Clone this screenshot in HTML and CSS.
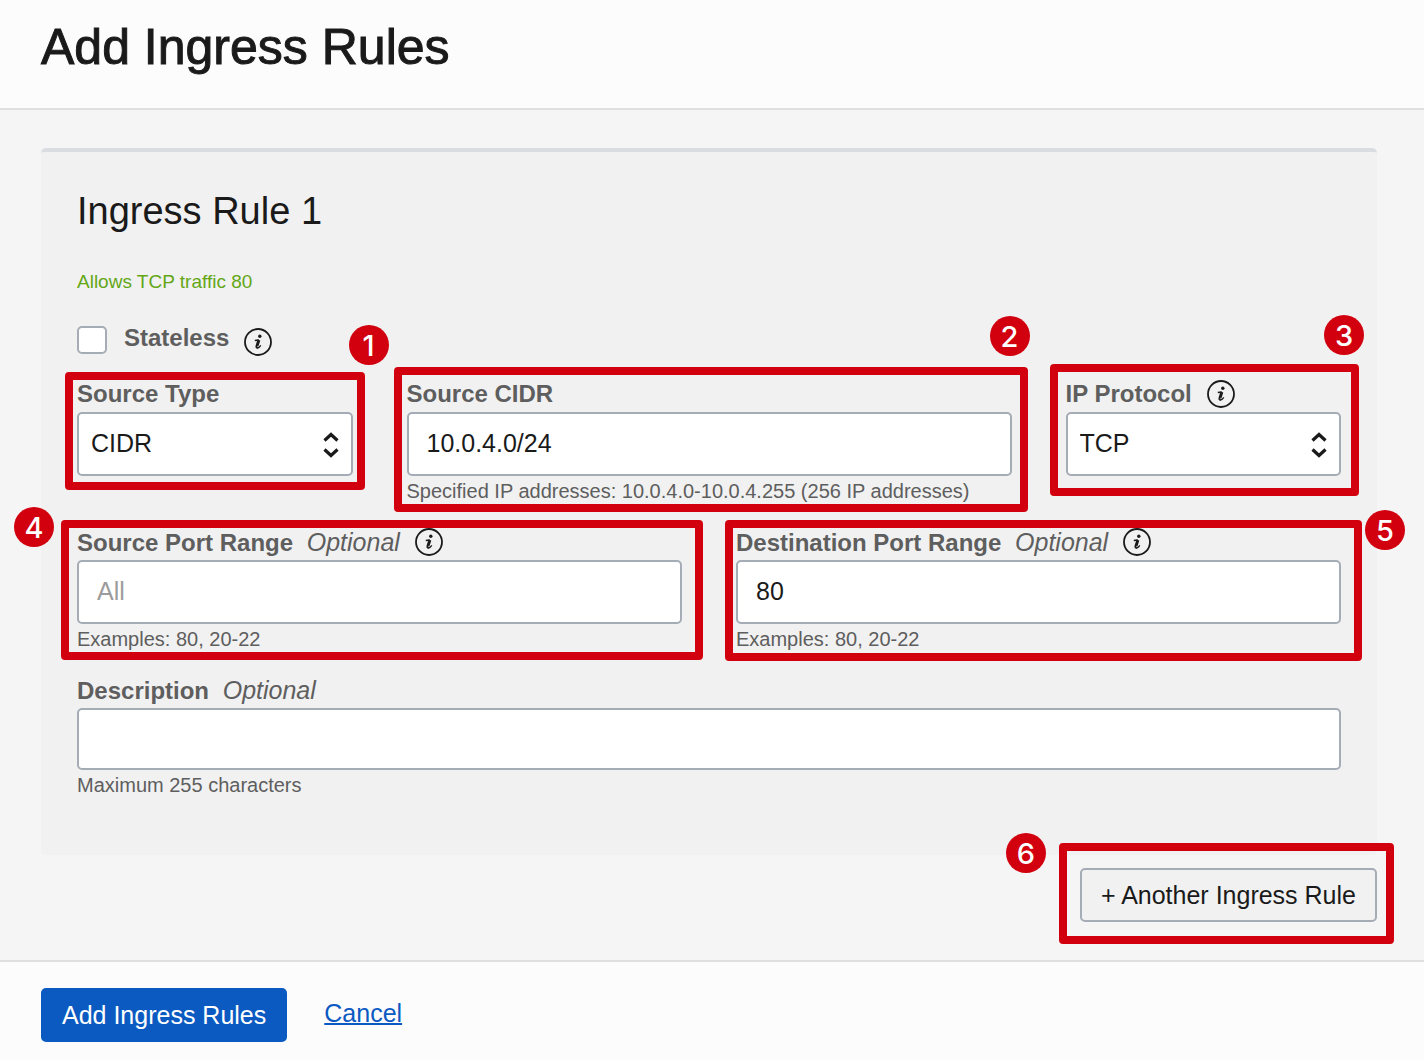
FILE: index.html
```html
<!DOCTYPE html>
<html lang="en">
<head>
<meta charset="utf-8">
<meta name="viewport" content="width=device-width, initial-scale=1">
<title>Add Ingress Rules</title>
<link rel="stylesheet" href="styles.css">
</head>
<body>
<svg width="0" height="0" class="sprite" aria-hidden="true">
  <symbol id="info" viewBox="0 0 28 28">
    <circle cx="14" cy="14" r="13" fill="none" stroke="currentColor" stroke-width="1.8"/>
    <circle cx="15.8" cy="8.2" r="1.7" fill="currentColor"/>
    <path d="M10.8 12.5 L14.8 12" fill="none" stroke="currentColor" stroke-width="1.4"/>
    <path d="M14.9 12 L13 18 Q12.6 19.6 13.7 19.3" fill="none" stroke="currentColor" stroke-width="2.9"/>
    <path d="M13.3 20 Q15.4 19.6 16.8 17.3" fill="none" stroke="currentColor" stroke-width="1.3"/>
  </symbol>
  <symbol id="updown" viewBox="0 0 16 26">
    <path d="M1.5 8.5 L8 2.5 L14.5 8.5 M1.5 17.5 L8 23.5 L14.5 17.5" fill="none" stroke="currentColor" stroke-width="3.2"/>
  </symbol>
</svg>

<header class="page-header">
  <h1>Add Ingress Rules</h1>
</header>

<main class="page-body">
  <section class="card">
    <h2>Ingress Rule 1</h2>
    <p class="summary">Allows TCP traffic 80</p>

    <div class="check-row">
      <input type="checkbox" id="stateless" class="checkbox">
      <label for="stateless" class="check-label">Stateless</label>
      <button type="button" class="info info-low" aria-label="About stateless rules"><svg><use href="#info"/></svg></button>
    </div>

    <div class="fields">
      <div class="field">
        <div class="label-row"><label for="source-type">Source Type</label></div>
        <div class="select-wrap">
          <select id="source-type" class="control select"><option>CIDR</option></select>
          <svg class="arrows" aria-hidden="true"><use href="#updown"/></svg>
        </div>
        <span class="frame frame-1"></span><span class="badge badge-1">1</span>
      </div>

      <div class="field wide">
        <div class="label-row"><label for="source-cidr">Source CIDR</label></div>
        <input type="text" id="source-cidr" class="control" value="10.0.4.0/24">
        <p class="hint">Specified IP addresses: 10.0.4.0-10.0.4.255 (256 IP addresses)</p>
        <span class="frame frame-2"></span><span class="badge badge-2">2</span>
      </div>

      <div class="field">
        <div class="label-row">
          <label for="protocol">IP Protocol</label>
          <button type="button" class="info" aria-label="About IP protocol"><svg><use href="#info"/></svg></button>
        </div>
        <div class="select-wrap">
          <select id="protocol" class="control select"><option>TCP</option></select>
          <svg class="arrows" aria-hidden="true"><use href="#updown"/></svg>
        </div>
        <span class="frame frame-3"></span><span class="badge badge-3">3</span>
      </div>

      <div class="field wide">
        <div class="label-row">
          <label for="source-port">Source Port Range <em>Optional</em></label>
          <button type="button" class="info" aria-label="About source port range"><svg><use href="#info"/></svg></button>
        </div>
        <input type="text" id="source-port" class="control" placeholder="All">
        <p class="hint">Examples: 80, 20-22</p>
        <span class="frame frame-4"></span><span class="badge badge-4">4</span>
      </div>

      <div class="field wide">
        <div class="label-row">
          <label for="dest-port">Destination Port Range <em>Optional</em></label>
          <button type="button" class="info" aria-label="About destination port range"><svg><use href="#info"/></svg></button>
        </div>
        <input type="text" id="dest-port" class="control" value="80">
        <p class="hint">Examples: 80, 20-22</p>
        <span class="frame frame-5"></span><span class="badge badge-5">5</span>
      </div>

      <div class="field full">
        <div class="label-row"><label for="description">Description <em>Optional</em></label></div>
        <input type="text" id="description" class="control control-short">
        <p class="hint">Maximum 255 characters</p>
      </div>
    </div>
  </section>

  <div class="add-row">
    <div class="add-wrap">
      <button type="button" class="button">+ Another Ingress Rule</button>
      <span class="frame frame-6"></span><span class="badge badge-6">6</span>
    </div>
  </div>
</main>

<footer class="page-footer">
  <button type="submit" class="button primary">Add Ingress Rules</button>
  <a href="#" class="cancel">Cancel</a>
</footer>
</body>
</html>
```

FILE: styles.css
```css
* {
  box-sizing: border-box;
}

body {
  margin: 0;
  min-height: 100vh;
  display: flex;
  flex-direction: column;
  background: #f5f5f5;
  color: #1a1a1a;
  font-family: "Liberation Sans", Arial, sans-serif;
  font-size: 25px;
}

h1, h2, p {
  margin: 0;
  font-weight: 400;
}

button, input, select {
  margin: 0;
  font: inherit;
  color: inherit;
}

.sprite {
  position: absolute;
}

.page-header {
  padding: 17px 41px 31px;
  background: #fcfcfc;
  border-bottom: 2px solid #dfdfdf;
}

h1 {
  font-size: 50px;
  line-height: 60px;
  -webkit-text-stroke: 1px #1a1a1a;
}

.page-body {
  flex: 1;
  padding: 38px 47px 38px 41px;
}

.card {
  padding: 35px 36px 55px;
  background: #f1f1f1;
  border-top: 4px solid #d9dce0;
  border-radius: 5px;
}

h2 {
  margin-bottom: 35px;
  font-size: 38px;
  line-height: 48px;
}

.summary {
  margin-bottom: 28px;
  color: #63a716;
  font-size: 19px;
  line-height: 24px;
}

.check-row {
  display: flex;
  align-items: center;
  height: 36px;
  margin-bottom: 18px;
}

.checkbox {
  appearance: none;
  width: 30px;
  height: 28px;
  margin-right: 17px;
  background: #fff;
  border: 2px solid #a6acb6;
  border-radius: 5px;
}

.check-label {
  padding-bottom: 4px;
  margin-right: 15px;
}

label {
  color: #5e5e5e;
  font-size: 24px;
  font-weight: 700;
}

label em {
  margin-left: 7px;
  font-size: 25px;
  font-weight: 400;
}

.info {
  display: block;
  width: 28px;
  height: 28px;
  padding: 0;
  background: none;
  border: 0;
}

.info-low {
  margin-top: 4px;
}

.info svg {
  display: block;
  width: 28px;
  height: 28px;
}

.fields {
  display: grid;
  grid-template-columns: repeat(4, minmax(0, 1fr));
  gap: 18px 54px;
  align-items: start;
}

.field {
  position: relative;
}

.wide {
  grid-column: span 2;
}

.full {
  grid-column: 1 / -1;
}

.label-row {
  display: flex;
  align-items: center;
  gap: 15px;
  height: 36px;
  white-space: nowrap;
}

.control {
  display: block;
  width: 100%;
  height: 64px;
  padding: 0 18px 2px;
  background: #fff;
  border: 2px solid #a6acb6;
  border-radius: 5px;
}

.control-short {
  height: 62px;
}

.control::placeholder {
  color: #9c9c9c;
}

.select-wrap {
  position: relative;
}

.select {
  appearance: none;
  padding: 0 12px 2px;
}

.arrows {
  position: absolute;
  top: 20px;
  right: 14px;
  width: 16px;
  height: 26px;
  pointer-events: none;
}

.hint {
  color: #5e5e5e;
  font-size: 20px;
  line-height: 30px;
}

.add-row {
  display: flex;
  justify-content: flex-end;
  margin-top: 13px;
}

.add-wrap {
  position: relative;
}

.button {
  display: block;
  height: 54px;
  padding: 0 19px;
  background: #f1f1f1;
  border: 2px solid #a6acb6;
  border-radius: 5px;
}

.primary {
  background: #0b5ac2;
  border-color: #0b5ac2;
  color: #fff;
}

.page-footer {
  display: flex;
  align-items: center;
  gap: 37px;
  padding: 26px 41px 18px;
  background: #fcfcfc;
  border-top: 2px solid #dfdfdf;
}

.cancel {
  padding-bottom: 4px;
  color: #0b5ac2;
  text-decoration-thickness: 2px;
}

/* Numbered callouts over the form */
.frame {
  position: absolute;
  border: 8px solid #d2000f;
  border-radius: 4px;
  pointer-events: none;
}

.frame-1 { inset: -4px -12px -14px -12px; }
.frame-2 { inset: -9px -16px -6px -13px; }
.frame-3 { inset: -12px -18px -20px -16px; }
.frame-4 { inset: -4px -21px -6px -16px; }
.frame-5 { inset: -4px -21px -7px -11px; }
.frame-6 { inset: -25px -17px -22px -21px; }

.badge {
  position: absolute;
  width: 40px;
  height: 40px;
  border-radius: 50%;
  background: #d2000f;
  color: #fff;
  font-family: Inter, "Liberation Sans", sans-serif;
  font-size: 29px;
  font-weight: 500;
  line-height: 42px;
  text-align: center;
  pointer-events: none;
}

.badge-1 { top: -51px; right: -36px; }
.badge-2 { top: -60px; right: -18px; }
.badge-3 { top: -61px; right: -23px; }
.badge-4 { top: -17px; left: -63px; }
.badge-5 { top: -14px; right: -64px; }
.badge-6 { top: -35px; left: -74px; }
```
